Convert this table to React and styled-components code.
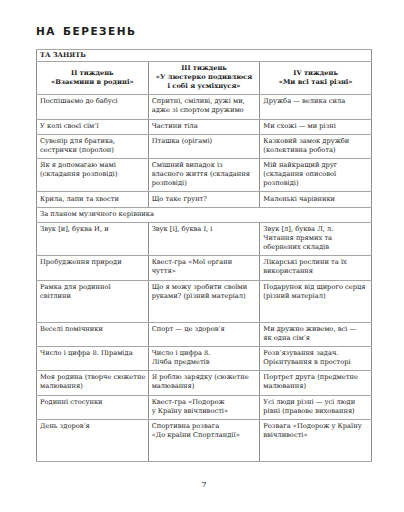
import styled, { createGlobalStyle } from "styled-components";

const GlobalStyle = createGlobalStyle`
  html, body {
    margin: 0;
    padding: 0;
    background: #ffffff;
  }
  body {
    width: 404px;
    height: 512px;
    overflow: hidden;
    font-family: "DejaVu Serif", "Liberation Serif", serif;
    color: #222;
  }
`;

const weeks = [
  { num: "II тиждень", title: "«Взаємини в родині»" },
  { num: "III тиждень", title: "«У люстерко подивлюся\nі собі я усміхнуся»" },
  { num: "IV тиждень", title: "«Ми всі такі різні»" },
];

const rows = [
  ["Поспішаємо до бабусі", "Спритні, сміливі, дужі ми,\nадже зі спортом дружимо", "Дружба — велика сила"],
  ["У колі своєї сім’ї", "Частини тіла", "Ми схожі — ми різні"],
  ["Сувенір для братика,\nсестрички (поролон)", "Пташка (орігамі)", "Казковий замок дружби\n(колективна робота)"],
  ["Як я допомагаю мамі\n(складання розповіді)", "Смішний випадок із\nвласного життя (складання\nрозповіді)", "Мій найкращий друг\n(складання описової\nрозповіді)"],
  ["Крила, лапи та хвости", "Що таке ґрунт?", "Маленькі чарівники"],
  { span: "За планом музичного керівника" },
  ["Звук [и], буква И, и", "Звук [і], буква І, і", "Звук [л], буква Л, л.\nЧитання прямих та\nобернених складів"],
  ["Пробудження природи", "Квест-гра «Мої органи\nчуття»", "Лікарські рослини та їх\nвикористання"],
  { tall: true, cells: ["Рамка для родинної\nсвітлини", "Що я можу зробити своїми\nруками? (різний матеріал)", "Подарунок від щирого серця\n(різний матеріал)"] },
  ["Веселі помічники", "Спорт — це здоров’я", "Ми дружно живемо, всі —\nяк одна сім’я"],
  ["Число і цифра 8. Піраміда", "Число і цифра 8.\nЛічба предметів", "Розв’язування задач.\nОрієнтування в просторі"],
  ["Моя родина (творче сюжетне\nмалювання)", "Я роблю зарядку (сюжетне\nмалювання)", "Портрет друга (предметне\nмалювання)"],
  ["Родинні стосунки", "Квест-гра «Подорож\nу Країну ввічливості»", "Усі люди різні — усі люди\nрівні (правове виховання)"],
  { tall: true, cells: ["День здоров’я", "Спортивна розвага\n«До країни Спортландії»", "Розвага «Подорож у Країну\nввічливості»"] },
];

const Page = styled.div`
  display: flex;
  flex-direction: column;
  align-items: flex-start;
  padding: 25px 32px 0 36px;
`;

const Title = styled.h1`
  margin: 0 0 12px;
  font-family: "DejaVu Sans", "Liberation Sans", sans-serif;
  font-size: 10.5px;
  font-weight: 700;
  letter-spacing: 1.5px;
  word-spacing: 2px;
  line-height: 12px;
  color: #1c1c1c;
`;

const Table = styled.table`
  width: 336px;
  table-layout: fixed;
  border-collapse: collapse;
  border: 1px solid #8a8a8a;
  font-size: 6.7px;
  line-height: 9px;
`;

const Cell = styled.td`
  border: 1px solid #a6a6a6;
  border-left-color: #8f8f8f;
  border-right-color: #8f8f8f;
  padding: 2.2px 3px ${(p) => (p.$tall ? "21px" : "3.1px")};
  vertical-align: top;
  white-space: pre;
  overflow: hidden;
`;

const SectionCell = styled(Cell)`
  font-weight: 700;
  padding: 1px 3px 1px;
`;

const HeadCell = styled(Cell)`
  text-align: center;
  vertical-align: middle;
  font-weight: 700;
`;

const Footer = styled.div`
  align-self: stretch;
  margin-top: 18px;
  width: 336px;
  text-align: center;
  font-size: 8px;
  line-height: 10px;
`;

export default function App() {
  return (
    <>
      <GlobalStyle />
      <Page>
        <Title>НА БЕРЕЗЕНЬ</Title>
        <Table>
          <tbody>
            <tr>
              <SectionCell colSpan={3}>ТА ЗАНЯТЬ</SectionCell>
            </tr>
            <tr>
              {weeks.map((w) => (
                <HeadCell key={w.num}>{`${w.num}\n${w.title}`}</HeadCell>
              ))}
            </tr>
            {rows.map((row, i) => {
              if (row.span) {
                return (
                  <tr key={i}>
                    <Cell colSpan={3}>{row.span}</Cell>
                  </tr>
                );
              }
              const cells = Array.isArray(row) ? row : row.cells;
              return (
                <tr key={i}>
                  {cells.map((c, j) => (
                    <Cell key={j} $tall={row.tall}>
                      {c}
                    </Cell>
                  ))}
                </tr>
              );
            })}
          </tbody>
        </Table>
        <Footer>7</Footer>
      </Page>
    </>
  );
}
